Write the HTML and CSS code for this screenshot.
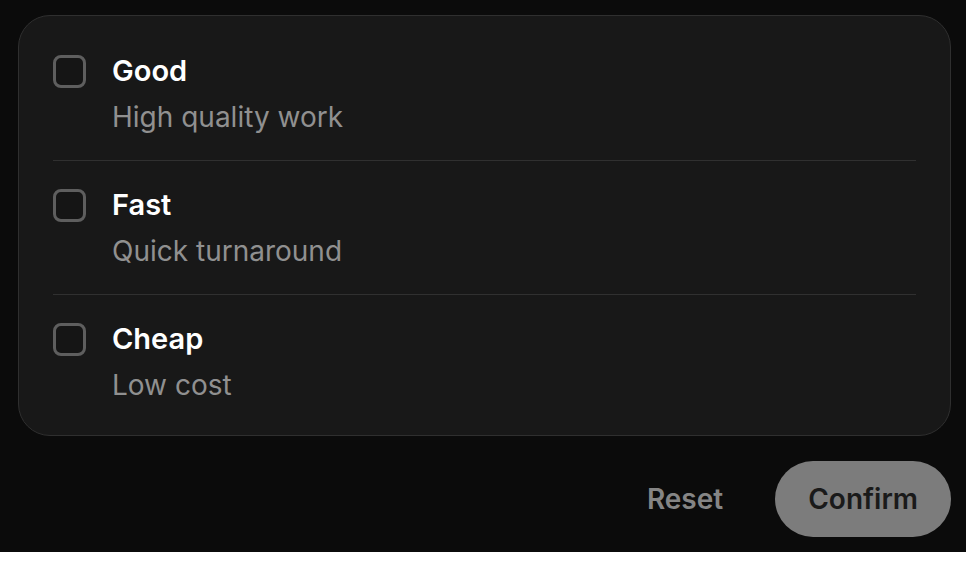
FILE: index.html
```html
<!DOCTYPE html>
<html lang="en">
<head>
<meta charset="utf-8">
<title>Options</title>
<link rel="stylesheet" href="styles.css">
</head>
<body>
<div class="screen">
  <div class="card">
    <label class="row">
      <span class="check"></span>
      <span class="text">
        <span class="title">Good</span>
        <span class="sub">High quality work</span>
      </span>
    </label>
    <label class="row">
      <span class="check"></span>
      <span class="text">
        <span class="title">Fast</span>
        <span class="sub">Quick turnaround</span>
      </span>
    </label>
    <label class="row">
      <span class="check"></span>
      <span class="text">
        <span class="title">Cheap</span>
        <span class="sub">Low cost</span>
      </span>
    </label>
  </div>
  <div class="actions">
    <button class="btn-reset">Reset</button>
    <button class="btn-confirm">Confirm</button>
  </div>
</div>
</body>
</html>
```

FILE: styles.css
```css
html, body {
  margin: 0;
  padding: 0;
  background: #ffffff;
}

body {
  font-family: Inter, "Noto Sans", "Liberation Sans", sans-serif;
}

.screen {
  box-sizing: border-box;
  height: 552px;
  background: #0b0b0b;
  padding: 15px 15px 0 18px;
  display: flex;
  flex-direction: column;
}

.card {
  background: #181818;
  border: 1px solid #2f2f2f;
  border-radius: 32px;
  padding: 11px 34px 7px;
}

.row {
  display: flex;
  align-items: flex-start;
  gap: 26px;
  padding: 26px 0;
  border-bottom: 1px solid #303030;
}

.row:last-child {
  border-bottom: none;
}

.check {
  box-sizing: border-box;
  flex: none;
  width: 33px;
  height: 33px;
  margin-top: 2px;
  border: 3px solid #5e5e5e;
  border-radius: 8px;
  background: #151515;
}

.text {
  display: flex;
  flex-direction: column;
  gap: 11px;
}

.title {
  font-size: 29px;
  line-height: 36px;
  font-weight: 600;
  color: #ffffff;
}

.sub {
  font-size: 28px;
  line-height: 34px;
  color: #909090;
}

.actions {
  display: flex;
  justify-content: flex-end;
  align-items: center;
  gap: 26px;
  margin-top: 25px;
}

.btn-reset,
.btn-confirm {
  font-family: inherit;
  font-size: 28px;
  font-weight: 600;
  border: none;
  cursor: pointer;
}

.btn-reset {
  background: transparent;
  color: #858585;
  padding: 0 26px;
  height: 76px;
}

.btn-confirm {
  background: #7c7c7c;
  color: #1a1a1a;
  height: 76px;
  padding: 0 33px;
  border-radius: 38px;
}
```
